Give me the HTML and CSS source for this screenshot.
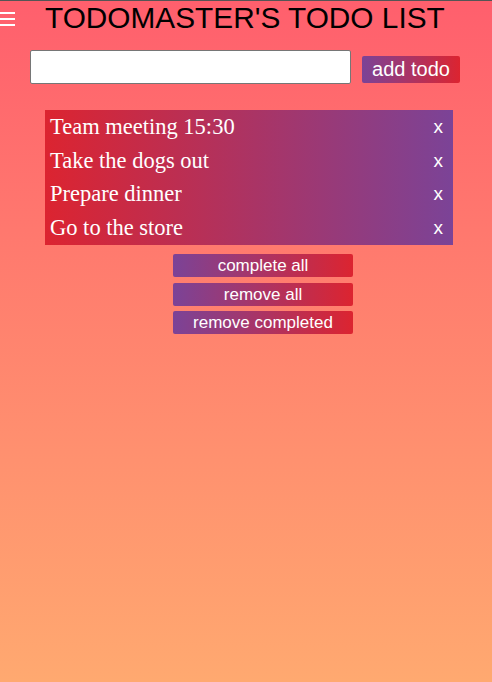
FILE: index.html
```html
<!DOCTYPE html>
<html>
<head>
<meta charset="utf-8">
<link rel="stylesheet" href="styles.css">
</head>
<body>
<div class="page">
  <header class="topbar">
    <div class="burger"><span></span><span></span><span></span></div>
    <h1 class="title">TODOMASTER'S TODO LIST</h1>
  </header>
  <div class="add-row">
    <input class="todo-input" type="text">
    <button class="add-btn">add todo</button>
  </div>
  <ul class="todo-list">
    <li class="todo-item"><span class="todo-text">Team meeting 15:30</span><span class="remove">x</span></li>
    <li class="todo-item"><span class="todo-text">Take the dogs out</span><span class="remove">x</span></li>
    <li class="todo-item"><span class="todo-text">Prepare dinner</span><span class="remove">x</span></li>
    <li class="todo-item"><span class="todo-text">Go to the store</span><span class="remove">x</span></li>
  </ul>
  <div class="actions">
    <button class="action-btn">complete all</button>
    <button class="action-btn">remove all</button>
    <button class="action-btn">remove completed</button>
  </div>
</div>
</body>
</html>
```
FILE: styles.css
```css
html, body {
  margin: 0;
  padding: 0;
  height: 100%;
}
body {
  background: linear-gradient(to bottom, #ff5f6d 0px, #ffa970 682px);
  border-top: 1px solid #555;
  box-sizing: border-box;
  font-family: "Liberation Sans", Arial, sans-serif;
}
.page {
  display: flex;
  flex-direction: column;
}
.topbar {
  display: flex;
  align-items: flex-start;
  height: 49px;
}
.burger {
  display: flex;
  flex-direction: column;
  gap: 4px;
  width: 15px;
  margin-top: 11px;
}
.burger span {
  display: block;
  height: 2px;
  background: #fff;
}
.title {
  margin: 0 0 0 30px;
  font-family: "Liberation Sans", Arial, sans-serif;
  font-weight: normal;
  font-size: 29.8px;
  line-height: 34px;
  color: #000;
}
.add-row {
  display: flex;
  align-items: center;
  padding-left: 30px;
  gap: 11px;
}
.todo-input {
  width: 321px;
  height: 34px;
  box-sizing: border-box;
  border: 1px solid #767676;
  border-radius: 2px;
  background: #fff;
  margin: 0;
}
.add-btn {
  height: 27px;
  width: 98px;
  margin-top: 5px;
  padding: 0;
  border: none;
  border-radius: 2px;
  background: linear-gradient(to right, #7b4397, #dc2430);
  color: #fff;
  font-family: "Liberation Sans", Arial, sans-serif;
  font-size: 20px;
}
.todo-list {
  list-style: none;
  margin: 26px 0 0 45px;
  padding: 0;
  width: 408px;
  height: 135px;
  display: flex;
  flex-direction: column;
  background: linear-gradient(to right, #dc2430, #7b4397);
}
.todo-item {
  flex: 1;
  display: flex;
  align-items: center;
  justify-content: space-between;
  padding: 0 10px 0 5px;
  color: #fff;
}
.todo-text {
  font-family: "Liberation Serif", "Times New Roman", serif;
  font-size: 22.5px;
}
.remove {
  font-family: "Liberation Sans", Arial, sans-serif;
  font-size: 19px;
}
.actions {
  display: flex;
  flex-direction: column;
  gap: 5.5px;
  margin: 9px 0 0 173px;
  width: 180px;
}
.action-btn {
  height: 23px;
  padding: 0;
  border: none;
  border-radius: 2px;
  background: linear-gradient(to right, #7b4397, #dc2430);
  color: #fff;
  font-family: "Liberation Sans", Arial, sans-serif;
  font-size: 17px;
  line-height: 23px;
}
```
